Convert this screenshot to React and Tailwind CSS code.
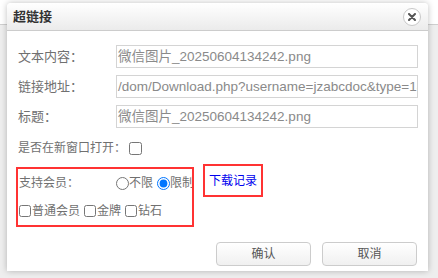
import React from "react";

const font = { fontFamily: '"Liberation Sans", "Noto Sans CJK SC", sans-serif' };

function Field({ label, value }) {
  return (
    <div className="flex items-center">
      <div className="w-[98px] shrink-0 text-[13px] text-[#707070]">{label}</div>
      <div className="h-[23px] w-[302px] overflow-hidden whitespace-nowrap border border-[#d4d4d4] pl-px text-[13.5px] leading-[21px] text-[#8a8a8a]">
        {value}
      </div>
    </div>
  );
}

function Check({ label }) {
  return (
    <label className="flex items-center">
      <input type="checkbox" className="m-0 h-[12px] w-[12px]" />
      <span className="ml-px">{label}</span>
    </label>
  );
}

export default function App() {
  return (
    <div className="relative h-[278px] w-[438px] overflow-hidden bg-[#eeeeee]" style={font}>
      <div className="h-[25px] border-b border-[#cfcfcf] bg-white"></div>

      {/* dialog */}
      <div className="absolute left-[7px] top-[3px] flex h-[268px] w-[421px] flex-col rounded-t-[4px] bg-white shadow-[0_0_6px_rgba(0,0,0,0.25)]">
        <div className="flex h-[28px] items-center justify-between rounded-t-[4px] border-b border-[#cccccc] bg-[linear-gradient(#ffffff,#ebebeb)] pl-[6px] pr-[7px]">
          <span className="text-[13px] font-bold text-[#333]">超链接</span>
          <div className="flex h-[18px] w-[18px] items-center justify-center rounded-full border border-[#c8c8c8] bg-white">
            <svg width="8" height="8" viewBox="0 0 8 8">
              <path d="M1 1L7 7M7 1L1 7" stroke="#555" strokeWidth="2" strokeLinecap="round" />
            </svg>
          </div>
        </div>

        <div className="flex flex-col pl-[11px] pt-[14px]">
          <div className="flex flex-col gap-[7px]">
            <Field label="文本内容：" value="微信图片_20250604134242.png" />
            <Field label="链接地址：" value="/dom/Download.php?username=jzabcdoc&type=1&amp;id=0" />
            <Field label="标题：" value="微信图片_20250604134242.png" />
          </div>

          <div className="mt-[11px] flex items-center text-[12px] text-[#707070]">
            <span>是否在新窗口打开：</span>
            <input type="checkbox" className="m-0 ml-[3px] h-[13px] w-[13px]" />
          </div>

          <div className="mt-[10px] flex items-start">
            <div className="ml-[-2px] flex h-[60px] w-[178px] flex-col overflow-hidden border-2 border-[#ff3333] pl-px text-[12px] text-[#707070]">
              <div className="mt-[3px] flex h-[22px] items-center whitespace-nowrap">
                <span className="w-[97px] shrink-0">支持会员：</span>
                <label className="flex items-center">
                  <input type="radio" name="m" className="m-0 h-[13px] w-[13px]" />
                  <span>不限</span>
                </label>
                <label className="ml-[4px] flex items-center">
                  <input type="radio" name="m" defaultChecked className="m-0 h-[13px] w-[13px]" />
                  <span>限制</span>
                </label>
              </div>
              <div className="mt-[8px] flex items-center gap-[4px]">
                <Check label="普通会员" />
                <Check label="金牌" />
                <Check label="钻石" />
              </div>
            </div>
            <div className="ml-[9px] mt-[-3px] flex h-[33px] w-[60px] items-center justify-center border-2 border-[#ff3333]">
              <a className="text-[12px] text-[#0000ee]">下载记录</a>
            </div>
          </div>
        </div>

        <div className="mt-auto flex justify-end gap-[11px] pb-[5px] pr-[11px]">
          <button className="h-[24px] w-[95px] rounded-[4px] border border-[#cccccc] bg-[linear-gradient(#ffffff,#f0f0f0)] text-[12px] text-[#555]">
            确认
          </button>
          <button className="h-[24px] w-[95px] rounded-[4px] border border-[#cccccc] bg-[linear-gradient(#ffffff,#f0f0f0)] text-[12px] text-[#555]">
            取消
          </button>
        </div>
      </div>
    </div>
  );
}
